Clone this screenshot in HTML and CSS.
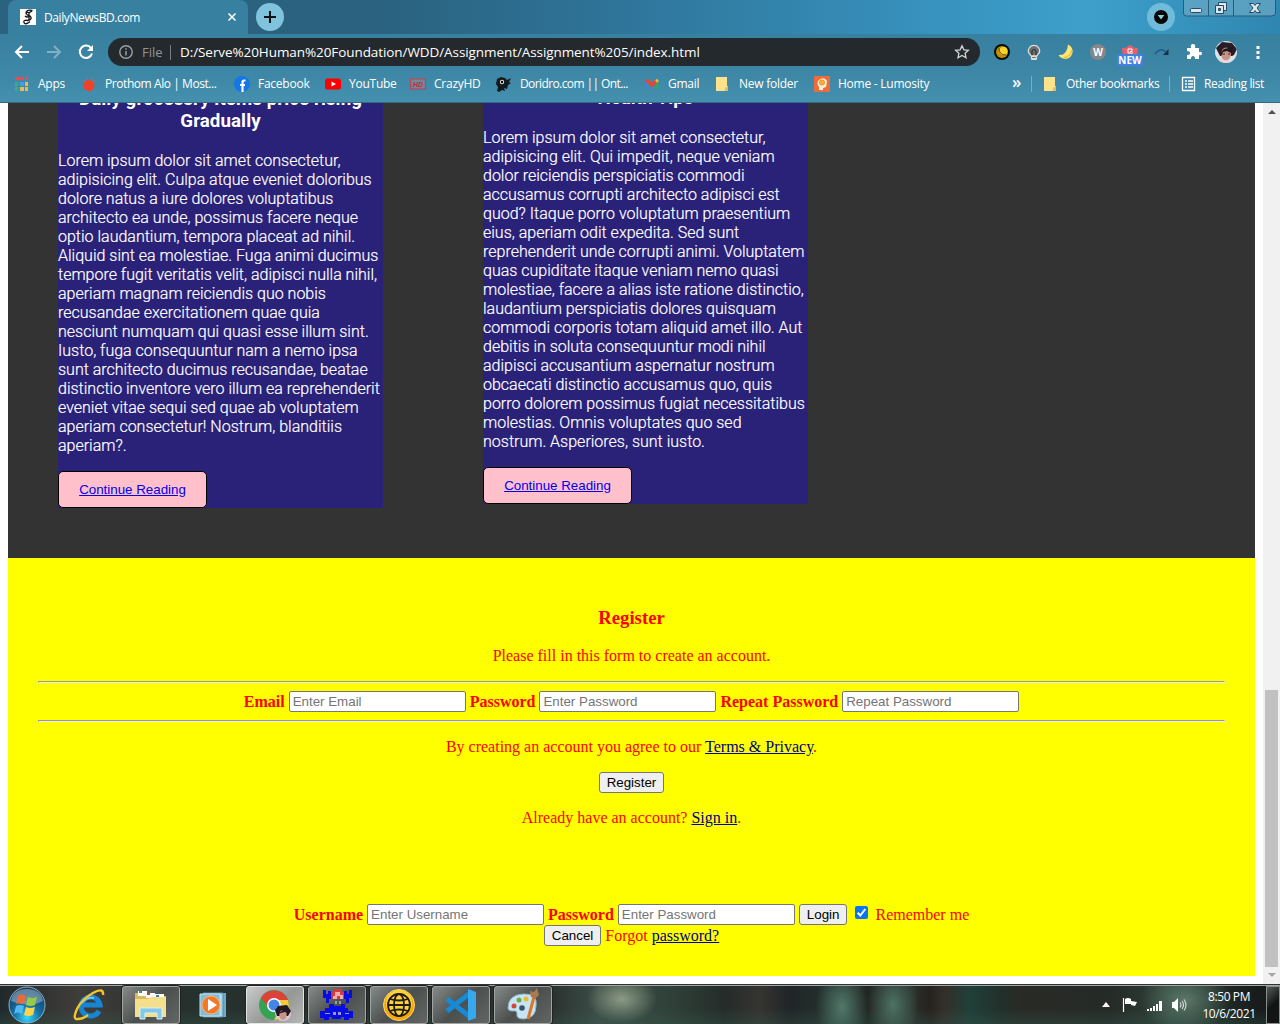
FILE: index.html
```html
<!DOCTYPE html>
<html lang="en">
<head>
<meta charset="utf-8">
<title>DailyNewsBD.com</title>
<link rel="stylesheet" href="styles.css">
</head>
<body>
<header class="tabs">
  <div class="tab">
    <svg class="fav" viewBox="0 0 16 16"><rect width="16" height="16" fill="#fff"/><path d="M12.500 1.500Q7 0 6 3.500 6 6 10 7q3 3-2 4.500M12 2Q9 4.500 6.500 3M10 7Q7 9 5 7M9 3v9M8 11.500q-5-1-4 2t6-1" fill="none" stroke="#161616" stroke-width="1.300"/></svg>
    <span class="tab-title">DailyNewsBD.com</span>
    <svg class="close" viewBox="0 0 10 10"><path d="M1.500 1.500l7 7m0-7l-7 7" stroke="#fff" stroke-width="1.500"/></svg>
  </div>
  <svg class="newtab" viewBox="0 0 28 28"><circle cx="14" cy="14" r="14" fill="#7fc4dc"/><path d="M8 14h12M14 8v12" stroke="#111" stroke-width="2"/></svg>
  <svg class="search-tabs" viewBox="0 0 28 28"><circle cx="14" cy="14" r="14" fill="#70bbd9"/><circle cx="14" cy="14" r="7" fill="#050505"/><path d="M10.700 12h6.600L14 16.500z" fill="#8bcbe3"/></svg>
  <svg class="winctl" viewBox="0 0 93 17"><path d="M.5-1v14q0 3 3 3h85q4 0 4-3V-1" fill="#6aaac6" fill-opacity=".7" stroke="#285c78"/><path d="M25.500 0v16M50.500 0v16" stroke="#285c78"/><rect x="7.500" y="8.500" width="11" height="4" rx="1" fill="#dbe7ee" stroke="#294b5e"/><path d="M35.500 2.500h8v8h-8z" fill="#dbe7ee" stroke="#294b5e"/><path d="M32.500 5.500h8v8h-8z" fill="#dbe7ee" stroke="#294b5e"/><path d="M35.500 8.500h2v2h-2z" fill="#4788a6" stroke="#294b5e"/><path d="M66.500 3.500h4l1.500 2 1.500-2h4l-3.400 4.500 3.400 4.500h-4l-1.500-2-1.500 2h-4L70 8z" fill="#dbe7ee" stroke="#294b5e"/></svg>
</header>

<nav class="toolbar">
  <svg class="tool" viewBox="0 0 16 16"><path d="M15 8H2M8 2L2 8l6 6" fill="none" stroke="#fff" stroke-width="2"/></svg>
  <svg class="tool" viewBox="0 0 16 16"><path d="M1 8h13M8 2l6 6-6 6" fill="none" stroke="#81afc5" stroke-width="2"/></svg>
  <svg class="tool" viewBox="0 0 16 16"><path d="M13.300 4.500A6.200 6.200 0 1 0 14 9.500" fill="none" stroke="#fff" stroke-width="2"/><path d="M15 1v6H9z" fill="#fff"/></svg>
  <div class="address">
    <svg class="info" viewBox="0 0 14 14"><circle cx="7" cy="7" r="6.200" fill="none" stroke="#9ba1a4" stroke-width="1.400"/><path d="M7 6v4.500M7 3.300v1.500" stroke="#9ba1a4" stroke-width="1.500"/></svg>
    <span class="scheme">File</span>
    <span class="url">D:/Serve%20Human%20Foundation/WDD/Assignment/Assignment%205/index.html</span>
    <svg class="star" viewBox="0 0 16 16"><path d="M8 1.700l1.900 4.100 4.500.5-3.300 3 .9 4.400L8 11.500l-4 2.200.9-4.400-3.300-3 4.500-.5z" fill="none" stroke="#d3d7d9" stroke-width="1.300"/></svg>
  </div>
  <div class="exts">
    <svg viewBox="0 0 16 16"><circle cx="8" cy="8" r="8" fill="#080b0c"/><circle cx="8" cy="8" r="6" fill="#bd9300"/><circle cx="9.500" cy="7" r="4" fill="#f6d42b"/><path d="M5 4q0 7 7 7" fill="none" stroke="#6b5608" stroke-width="1"/></svg>
    <svg viewBox="0 0 16 16"><path d="M5 12Q4 10 2.500 8.500A5.700 5.700 0 1 1 13.500 8.500Q12 10 11 12z" fill="#6b6d6f" stroke="#dededb" stroke-width="1.200"/><path d="M6 11V7q2-3 4 0v4" fill="none" stroke="#333" stroke-width="1.200"/><rect x="5" y="11.500" width="6" height="4.500" rx="1" fill="#deddd8"/><path d="M6 13.500h4" stroke="#777"/></svg>
    <svg viewBox="0 0 16 16"><path d="M10 .5A7.500 7.500 0 1 1 .5 11Q9 12 10 .5z" fill="#ffe574"/><path d="M14 6q-1 6-8 8" stroke="#f2bc39" stroke-width="1.500" fill="none"/></svg>
    <svg viewBox="0 0 16 16"><circle cx="8" cy="8" r="8" fill="#85878a"/><text x="8" y="11.500" text-anchor="middle" class="w">W</text></svg>
    <div class="badge-ext"><svg viewBox="0 0 16 16"><path d="M0 4l4-.3L8 .8l4 2.900 4 .3-1 8H1z" fill="#e5606a"/><path d="M8 7.500h2V5H6v4h5" fill="none" stroke="#fff" stroke-width="1"/></svg><span class="new">NEW</span></div>
    <svg viewBox="0 0 16 16"><path d="M1 10Q6 3 12 8" fill="none" stroke="#24598c" stroke-width="1.600"/><path d="M14.500 5v6H9z" fill="#17324d"/></svg>
    <svg viewBox="0 0 16 16"><path d="M1 4h4Q4 0 7 0t2 4h4v4q3-1 3 1.500T13 11v4H9q0-3-2-3t-2 3H1v-4q3 0 3-2T1 7z" fill="#fff"/></svg>
    <svg class="avatar" viewBox="0 0 22 22"><clipPath id="face"><circle cx="11" cy="11" r="11"/></clipPath><g clip-path="url(#face)"><path d="M0 0h22v22H0z" fill="#dce3e6"/><path d="M1 7L7 1l10 1 5 6-3 6-2 1H5z" fill="#281c28"/><ellipse cx="11" cy="13" rx="5" ry="6.500" fill="#c89488"/><path d="M5 12l4-4 9-2-2 6-4-2-4 1-2 4z" fill="#211721"/><path d="M7 13h3m3 0h2" stroke="#3b2129"/><path d="M1 20q4-3 7-1l6 1 5 2H1z" fill="#ebd5d3"/></g></svg>
    <svg viewBox="0 0 16 16"><path d="M6.500 2h3v3h-3zM6.500 7h3v3h-3zM6.500 12h3v3h-3z" fill="#fff"/></svg>
  </div>
</nav>

<nav class="bookmarks">
  <a class="bm"><svg viewBox="0 0 16 16"><path d="M1 1h4v3H1zm5 0h4v3H6zm5 0h3v3h-3z" fill="#e04f55"/><path d="M1 6h3v4H1zm0 5h3v4H1z" fill="#35b179"/><path d="M6 6h4v4H6z" fill="#479ce7"/><path d="M11 6h3v4h-3zM6 11h4v4H6zm5 0h3v4h-3z" fill="#e7bc48"/></svg>Apps</a>
  <a class="bm tight"><svg viewBox="0 0 16 16"><circle cx="8" cy="9.500" r="5.500" fill="#ef4329"/><path d="M2.500 4l2 2M6 1.500l1 3m4-3l-1 3m4-.500l-2 2" stroke="#a86d72" stroke-width="1.200"/></svg>Prothom Alo | Most...</a>
  <a class="bm"><svg viewBox="0 0 16 16"><circle cx="8" cy="8" r="8" fill="#1477e5"/><path d="M11.500 4.500H10q-1.500 0-1.500 2V16M6 9h5" fill="none" stroke="#fff" stroke-width="2.200"/></svg>Facebook</a>
  <a class="bm"><svg viewBox="0 0 16 16"><rect y="2.500" width="16" height="11" rx="2.500" fill="#f00"/><path d="M6.500 5.500l4.500 2.500-4.500 2.500z" fill="#fff"/></svg>YouTube</a>
  <a class="bm"><svg viewBox="0 0 16 16"><rect x=".6" y="3" width="14.800" height="10" fill="#75879b" stroke="#b64956" stroke-width="1.200"/><text x="8" y="10.700" text-anchor="middle" class="hd">HD</text></svg>CrazyHD</a>
  <a class="bm tighter"><svg viewBox="0 0 16 16"><path d="M1 3l4-2 4 1 2 2 4-2-2 4 2 1-3 2-1 4-3-1 1 3-3-1-3 2-2-1 1-4-2-3z" fill="#14191c"/><circle cx="6" cy="6" r="2.200" fill="#dae2e4"/><circle cx="6" cy="6" r="1.200"/></svg>Doridro.com || Ont...</a>
  <a class="bm"><svg viewBox="0 0 16 16"><path d="M2.500 13V5" stroke="#4482df" stroke-width="2.600"/><path d="M13 13V5" stroke="#33a661" stroke-width="2.600"/><path d="M2 4l6 5 5-5" fill="none" stroke="#e84436" stroke-width="3.400"/><path d="M12 5.500L14 4" stroke="#f5bd2b" stroke-width="3"/></svg>Gmail</a>
  <a class="bm"><svg viewBox="0 0 16 16"><path d="M1 1h11v9h1v5H1z" fill="#fbe28b"/><path d="M10 15v-3l3-2v5z" fill="#e2bc58"/></svg>New folder</a>
  <a class="bm"><svg viewBox="0 0 16 16"><path d="M0 0h16v16H0z" fill="#ee6c3c"/><path d="M5 14v-3q-3-4 0-7 5-4 8 1l-1 6-3 1v2z" fill="#fff1d5"/><circle cx="8" cy="6.500" r="2.600" fill="#efb542" stroke="#e49328"/></svg>Home - Lumosity</a>
  <span class="more">»</span>
  <a class="bm other"><svg viewBox="0 0 16 16"><path d="M1 1h11v9h1v5H1z" fill="#fbe28b"/><path d="M10 15v-3l3-2v5z" fill="#e2bc58"/></svg>Other bookmarks</a>
  <a class="bm other"><svg viewBox="0 0 16 16"><path d="M1.500 1.500h12v13h-12z" fill="none" stroke="#fff" stroke-width="1.300"/><path d="M4 5h2M4 8h2M4 11h2M7 5h5M7 8h5M7 11h5" stroke="#fff" stroke-width="1.500"/></svg>Reading list</a>
</nav>

<div class="viewport">
  <main class="page">
    <section class="news">
      <article class="card">
        <h3>Daily grocessry items price rising<br>Gradually</h3>
        <p>Lorem ipsum dolor sit amet consectetur,<br>adipisicing elit. Culpa atque eveniet doloribus<br>dolore natus a iure dolores voluptatibus<br>architecto ea unde, possimus facere neque<br>optio laudantium, tempora placeat ad nihil.<br>Aliquid sint ea molestiae. Fuga animi ducimus<br>tempore fugit veritatis velit, adipisci nulla nihil,<br>aperiam magnam reiciendis quo nobis<br>recusandae exercitationem quae quia<br>nesciunt numquam qui quasi esse illum sint.<br>Iusto, fuga consequuntur nam a nemo ipsa<br>sunt architecto ducimus recusandae, beatae<br>distinctio inventore vero illum ea reprehenderit<br>eveniet vitae sequi sed quae ab voluptatem<br>aperiam consectetur! Nostrum, blanditiis<br>aperiam?.</p>
        <button class="read"><a href="#">Continue Reading</a></button>
      </article>
      <article class="card">
        <h3>Health Tips</h3>
        <p>Lorem ipsum dolor sit amet consectetur,<br>adipisicing elit. Qui impedit, neque veniam<br>dolor reiciendis perspiciatis commodi<br>accusamus corrupti architecto adipisci est<br>quod? Itaque porro voluptatum praesentium<br>eius, aperiam odit expedita. Sed sunt<br>reprehenderit unde corrupti animi. Voluptatem<br>quas cupiditate itaque veniam nemo quasi<br>molestiae, facere a alias iste ratione distinctio,<br>laudantium perspiciatis dolores quisquam<br>commodi corporis totam aliquid amet illo. Aut<br>debitis in soluta consequuntur modi nihil<br>adipisci accusantium aspernatur nostrum<br>obcaecati distinctio accusamus quo, quis<br>porro dolorem possimus fugiat necessitatibus<br>molestias. Omnis voluptates quo sed<br>nostrum. Asperiores, sunt iusto.</p>
        <button class="read"><a href="#">Continue Reading</a></button>
      </article>
    </section>
    <section class="forms">
      <form class="register">
        <h3>Register</h3>
        <p>Please fill in this form to create an account.</p>
        <hr>
        <div class="row"><b>Email</b> <input placeholder="Enter Email"> <b>Password</b> <input placeholder="Enter Password"> <b>Repeat Password</b> <input placeholder="Repeat Password"></div>
        <hr>
        <p>By creating an account you agree to our <a href="#">Terms &amp; Privacy</a>.</p>
        <div class="row"><button class="btn" type="button">Register</button></div>
        <p>Already have an account? <a href="#">Sign in</a>.</p>
      </form>
      <form class="login">
        <div class="row"><b>Username</b> <input placeholder="Enter Username"> <b>Password</b> <input placeholder="Enter Password"> <button class="btn" type="button">Login</button> <svg class="check" viewBox="0 0 13 13"><rect width="13" height="13" rx="2" fill="#0875f5"/><path d="M2.700 6.800l2.600 2.700 5-6.500" fill="none" stroke="#fff" stroke-width="2"/></svg> Remember me</div>
        <div class="row"><button class="btn" type="button">Cancel</button> Forgot <a href="#">password?</a></div>
      </form>
    </section>
  </main>
  <aside class="scroll"><i class="up"></i><div class="thumb"></div><i class="down"></i></aside>
</div>

<footer class="taskbar">
  <div class="task start"><svg viewBox="0 0 38 38"><defs><radialGradient id="orb" cx=".5" cy=".85" r=".8"><stop offset="0" stop-color="#35d8ff"/><stop offset=".45" stop-color="#156fa7"/><stop offset="1" stop-color="#183a58"/></radialGradient></defs><circle cx="19" cy="19" r="18" fill="url(#orb)" stroke="#8db2c5"/><path d="M3 15Q5 3 19 3t16 12q-14 7-32 0z" fill="#bbd2df" opacity=".45"/><path d="M10 10q4-3 8 0l-2 8q-4-2-8 0z" fill="#ee6935"/><path d="M20 11q4 2 9 0l-2 8q-4 2-9 0z" fill="#9bca42"/><path d="M8 20q4-2 8 0l-2 8q-4-3-8 0z" fill="#53b8ed"/><path d="M18 21q4 2 9 0l-2 8q-5 2-9 0z" fill="#ffd447"/></svg></div>
  <div class="task"><svg viewBox="0 0 34 34"><path d="M27 23a9.500 9.500 0 1 1 1-6H11" fill="none" stroke="#1785d3" stroke-width="5"/><path d="M10 15q4-6 12-5" fill="none" stroke="#69c7f4" stroke-width="2"/><path d="M31 7Q32-1 21 5T5 21Q0 32 6 31q5 0 10-4" fill="none" stroke="#f2c52e" stroke-width="2.400"/></svg></div>
  <div class="task open"><svg viewBox="0 0 34 34"><path d="M1 5h12l2 3h17v21H1z" fill="#d9b95c"/><path d="M4 3h9v5H4zm8 2h9v5h-9zm9 1h9v5h-9z" fill="#fff"/><path d="M5 3h3v2H5z" fill="#2ca74b"/><path d="M13 5h3v2h-3z" fill="#c44335"/><path d="M22 7h3v2h-3z" fill="#3486cb"/><path d="M1 11h13l2-2h16v20H1z" fill="#f6df8c"/><path d="M6 31V20h22v11h-5v-6H11v6z" fill="#83c9e7" stroke="#d5f0f9"/></svg></div>
  <div class="task"><svg viewBox="0 0 34 34"><path d="M10 5h20v24H10z" fill="#6aabc9"/><path d="M7 5h20v24H7z" fill="#a6d3e5" stroke="#538ba8"/><path d="M4 6h20v22H4z" fill="#83bbd8" stroke="#c4e1ec"/><circle cx="15" cy="17" r="9" fill="#ee792b" stroke="#ffb56e"/><path d="M12 11l9 6-9 6z" fill="#fff"/></svg></div>
  <div class="task open active"><svg viewBox="0 0 34 34"><circle cx="16" cy="17" r="15" fill="#35a354"/><path d="M30 12a15 15 0 0 1-14 20l7-13-4-7z" fill="#f6c83c"/><path d="M3 10a15 15 0 0 1 27 2H16q-5 1-6 7z" fill="#dc4238"/><circle cx="16" cy="17" r="7" fill="#fff"/><circle cx="16" cy="17" r="5.500" fill="#4385e8"/><circle cx="25" cy="25" r="8" fill="#e1c8cf"/><path d="M17 22l3-4 9-1 4 6-3 5H19z" fill="#211821"/><ellipse cx="25" cy="27" rx="3.700" ry="5" fill="#c8948a"/><path d="M20 26l6-5 5 4-4-1-4 1z" fill="#211821"/></svg></div>
  <div class="task open"><svg viewBox="0 0 34 34" shape-rendering="crispEdges"><path d="M3 2h3v4h2V3h3v8H9v5h5v2h7v-2h5v-5h-2V3h3v3h2V2h3v8h-3v5h-4v5h3v3h5v7h-4v2h-5v-3h-3v2H12v-2H9v3H4v-2H0v-7h5v-3h4v-5H6v-5H3z" fill="#070ce4"/><path d="M12 4h2V1h8v3h2v7H12z" fill="#d63a3e"/><path d="M13 8h2V4h5v3h3v4h-3V8h-3v3h-4z" fill="#efb1ad"/><path d="M15 13h2v3h-2zm4 0h2v3h-2zM5 25h5v1H5zm8-1h3v3h-3zm5 0h3v3h-3zm7 1h4v1h-4z" fill="#989bb3"/></svg></div>
  <div class="task open"><svg viewBox="0 0 34 34"><circle cx="17" cy="17" r="15.500" fill="#f7a70c" stroke="#ffd566"/><circle cx="17" cy="15" r="13" fill="#ffd13d"/><g fill="none" stroke="#211d13" stroke-width="1.800"><circle cx="17" cy="17" r="11"/><ellipse cx="17" cy="17" rx="5" ry="11"/><path d="M6 17h22M8 11q9 3 18 0M8 23q9-3 18 0"/></g></svg></div>
  <div class="task open"><svg viewBox="0 0 34 34"><path d="M3 11L25 28M3 23L25 6" stroke="#168ad4" stroke-width="5"/><path d="M24 1l8 3v26l-8 3z" fill="#35a8ee"/></svg></div>
  <div class="task open"><svg viewBox="0 0 34 34"><path d="M2 20Q2 7 17 6t13 12q0 12-12 13-8 0-7-5 0-4-4-3-5 0-5-3z" fill="#c8e4f2" stroke="#8ab5ca"/><circle cx="8" cy="18" r="2.500" fill="#d34640"/><circle cx="13" cy="12" r="2.500" fill="#65ad48"/><circle cx="20" cy="11" r="2.500" fill="#e6ba35"/><circle cx="16" cy="20" r="2.800" fill="#35556c"/><path d="M28 9L22 31" stroke="#dd7725" stroke-width="3"/><path d="M25 9l-1-6 4 1 3-4 2 7-4 4z" fill="#a77b52"/></svg></div>
  <div class="tray">
    <svg class="t-up" viewBox="0 0 8 5"><path d="M0 5l4-5 4 5z" fill="#fff"/></svg>
    <svg class="t-flag" viewBox="0 0 16 15"><path d="M1.500 1v14" stroke="#fff" stroke-width="1.200"/><path d="M3 2q3-2 6 0v2l6 1-2 4-4-1V7H3z" fill="#fff"/></svg>
    <svg class="t-net" viewBox="0 0 16 12"><path d="M0 10h2v2H0zm3-1h2v3H3zm3-2h2v5H6zm3-2h2v7H9zm3-3h3v10h-3z" fill="#fff"/></svg>
    <svg class="t-vol" viewBox="0 0 16 14"><path d="M1 4h2l4-4v14l-4-4H1z" fill="#fff"/><path d="M9 4.500q2 2.500 0 5M11 3q3 4 0 8M13 1.500q4 5.500 0 11" fill="none" stroke="#ddd" stroke-width="1.100"/></svg>
    <div class="clock">8:50 PM<br>10/6/2021</div>
    <div class="peek"></div>
  </div>
</footer>
</body>
</html>
```
FILE: styles.css
```css
* { box-sizing: border-box; }
svg { display: block; flex: none; }
body { margin: 0; width: 1280px; height: 1024px; overflow: hidden; display: flex; flex-direction: column; background: #fff; font: 12px "Open Sans", sans-serif; }

.tabs { height: 34px; flex: none; display: flex; align-items: flex-start; padding-left: 8px; background: linear-gradient(90deg, #2b6280, #2a6280 30%, #2f7499 48%, #368fba 70%, #3da0cb 85%, #2f86b0); }
.tab { width: 240px; height: 34px; display: flex; align-items: center; padding: 0 12px; border-radius: 8px 8px 0 0; background: #37809f; color: #fff; }
.fav { width: 16px; height: 16px; }
.tab-title { margin-left: 8px; flex: 1; letter-spacing: -.4px; }
.close { width: 10px; height: 10px; margin-right: -1px; }
.newtab { width: 28px; height: 28px; margin: 3px 0 0 8px; }
.search-tabs { width: 28px; height: 28px; margin: 3px 8px 0 auto; }
.winctl { width: 93px; height: 17px; margin-right: 4px; }

.toolbar { height: 36px; flex: none; display: flex; align-items: center; background: linear-gradient(#37809f, #3d86a5); padding-left: 14px; }
.tool { width: 16px; height: 16px; margin-right: 16px; }
.address { width: 872px; height: 28px; margin-left: -2px; display: flex; align-items: center; border-radius: 14px; background: #23292c; padding: 0 10px 0 11px; color: #fff; font-size: 13px; }
.info { width: 14px; height: 14px; }
.scheme { color: #8f9598; margin-left: 9px; padding-right: 7px; border-right: 1px solid #777d80; line-height: 15px; width: 29px; }
.url { margin-left: 9px; flex: 1; white-space: nowrap; font-size: 13.500px; letter-spacing: -.08px; }
.star { width: 16px; height: 16px; }
.exts { flex: 1; height: 36px; display: grid; grid-template-columns: repeat(9, 32px); align-items: center; justify-items: center; padding-left: 6px; }
.exts svg { width: 16px; height: 16px; }
.exts .avatar { width: 22px; height: 22px; }
.w { font: bold 10px "Open Sans", sans-serif; fill: #fff; }
.badge-ext { position: relative; }
.new { position: absolute; left: -5px; top: 10px; width: 26px; height: 12px; border-radius: 2px; background: #4280e4; color: #fff; font: bold 10px/12px "Open Sans", sans-serif; text-align: center; }

.bookmarks { height: 33px; flex: none; display: grid; grid-template-columns: 67px 153px 91px 85px 86px 148px 71px 99px 198px 19px 138px 1fr; align-items: center; padding: 0 0 5px 14px; background: linear-gradient(#3d86a5, #4490ae); border-bottom: 1px solid #356981; color: #fff; }
.bm { display: flex; align-items: center; gap: 8px; white-space: nowrap; letter-spacing: -.25px; }
.bm svg { width: 16px; height: 16px; }
.tight { letter-spacing: -.43px; }
.tighter { letter-spacing: -.6px; }
.other { border-left: 1px solid #78adc3; padding-left: 11px; height: 16px; gap: 7px; letter-spacing: -.35px; }
.hd { font: italic bold 7px "Liberation Sans", sans-serif; letter-spacing: 0; fill: #c8283c; }
.more { font-size: 17px; font-weight: 600; line-height: 16px; margin-top: -4px; }

.viewport { height: 881px; flex: none; display: flex; overflow: hidden; }
.page { width: 1247px; margin: -15px 8px 0; flex: none; }
.news { height: 470px; padding-left: 50px; display: flex; align-items: flex-start; gap: 100px; background: #333; color: #fff; font: 16px/19px Roboto, sans-serif; }
.card { width: 325px; background: #2a2178; white-space: nowrap; }
.card h3 { margin: 0; font-size: 18.720px; line-height: 22px; text-align: center; }
.card:first-child h3 { letter-spacing: .08px; }
.card p { margin: 18.720px 0 16px; font-weight: 300; -webkit-text-stroke: .2px #fff; }
.card + .card { margin-top: -1px; }
.read { display: block; width: 149px; height: 37px; padding: 0; border: 1px solid #000; border-radius: 5px; background: pink; font: 13.333px "Liberation Sans", sans-serif; }
.read a { color: #00e; }

.forms { height: 418px; padding: 49px 30px 30px; background: #ff0; color: #f00; font: 16px/18px "Liberation Serif", serif; text-align: center; }
.forms h3 { margin: 0 0 18.720px; font-size: 18.720px; line-height: 21px; }
.forms p { margin: 16px 0; }
.forms a { color: #00008b; }
.forms hr { margin: 8px 0; border: 1px inset #eee; }
.row { height: 21px; line-height: 21px; white-space: nowrap; }
.row input { width: 177px; height: 21px; margin: 0; padding: 1px 3px; border: 1px solid #767676; border-radius: 2px; background: #fff; font: 13.333px "Liberation Sans", sans-serif; vertical-align: top; }
.row input::placeholder { color: #757575; }
.btn { height: 21px; margin: 0; padding: 0 7px; border: 1px solid #767676; border-radius: 3px; background: #efefef; color: #000; font: 13.333px "Liberation Sans", sans-serif; vertical-align: top; }
.login { padding-top: 61px; }
.check { display: inline-block; width: 13px; height: 13px; margin: 2px 3px 0 4px; vertical-align: top; }

.scroll { width: 17px; background: #f1f1f1; display: flex; flex-direction: column; align-items: center; padding: 7px 0 7px; }
.up { border: 4px solid transparent; border-top: 0; border-bottom: 4px solid #505050; }
.down { border: 4px solid transparent; border-bottom: 0; border-top: 4px solid #a3a3a3; margin-top: auto; }
.thumb { width: 13px; height: 277px; margin-top: 576px; background: #c1c1c1; }

.taskbar { height: 40px; flex: none; display: flex; align-items: center; gap: 4px; border-top: 1px solid #303336; box-shadow: inset 0 1px #a0a5a5; background: radial-gradient(35px 24px at 622px 14px, #8c9b85, transparent), radial-gradient(26px 40px at 842px 22px, #52786a, transparent), radial-gradient(26px 40px at 893px 20px, #4d7364, transparent), radial-gradient(45px 34px at 1185px 15px, #5a7768, transparent), linear-gradient(transparent 60%, rgba(55, 95, 82, .3)), linear-gradient(90deg, #20292a, #403d3a 80px, #26302d 180px, #2a312f 550px, #3c4e47 600px, #304139 670px, #252c29 725px, #353431 760px, #202527 790px, #24322e 830px, #222623 870px, #2b302d 910px, #26231f 930px, #342f2b 945px, #1f4038 970px, #22302b 1000px, #292a26 1020px, #252a27 1110px, #2d4038 1170px, #171b1a 1260px); }
.task { width: 58px; height: 38px; flex: none; display: flex; align-items: center; justify-content: center; }
.task svg { width: 34px; height: 34px; }
.task.start { width: 56px; }
.task.start svg { width: 38px; height: 38px; margin-left: -2px; }
.open { border: 1px solid #a0a4a2; border-radius: 3px; background: linear-gradient(135deg, #858987, #4b504e 50%, #626765); box-shadow: 0 0 0 1px #222; }
.active { background: linear-gradient(135deg, #c9cbca, #959795 55%, #b6b8b7); border-color: #e3e5e4; }
.tray { margin-left: auto; height: 39px; display: flex; align-items: center; color: #fff; }
.t-up { width: 8px; height: 5px; margin-right: 12px; }
.t-flag { width: 16px; height: 15px; margin-right: 9px; }
.t-net { width: 16px; height: 12px; margin-right: 8px; }
.t-vol { width: 16px; height: 14px; margin-right: 14px; }
.clock { width: 56px; text-align: center; line-height: 17px; letter-spacing: -.4px; white-space: nowrap; margin-right: 9px; }
.peek { width: 14px; height: 38px; border: 1px solid #898e8d; background: linear-gradient(135deg, #555b59, #121514 50%); }
```
